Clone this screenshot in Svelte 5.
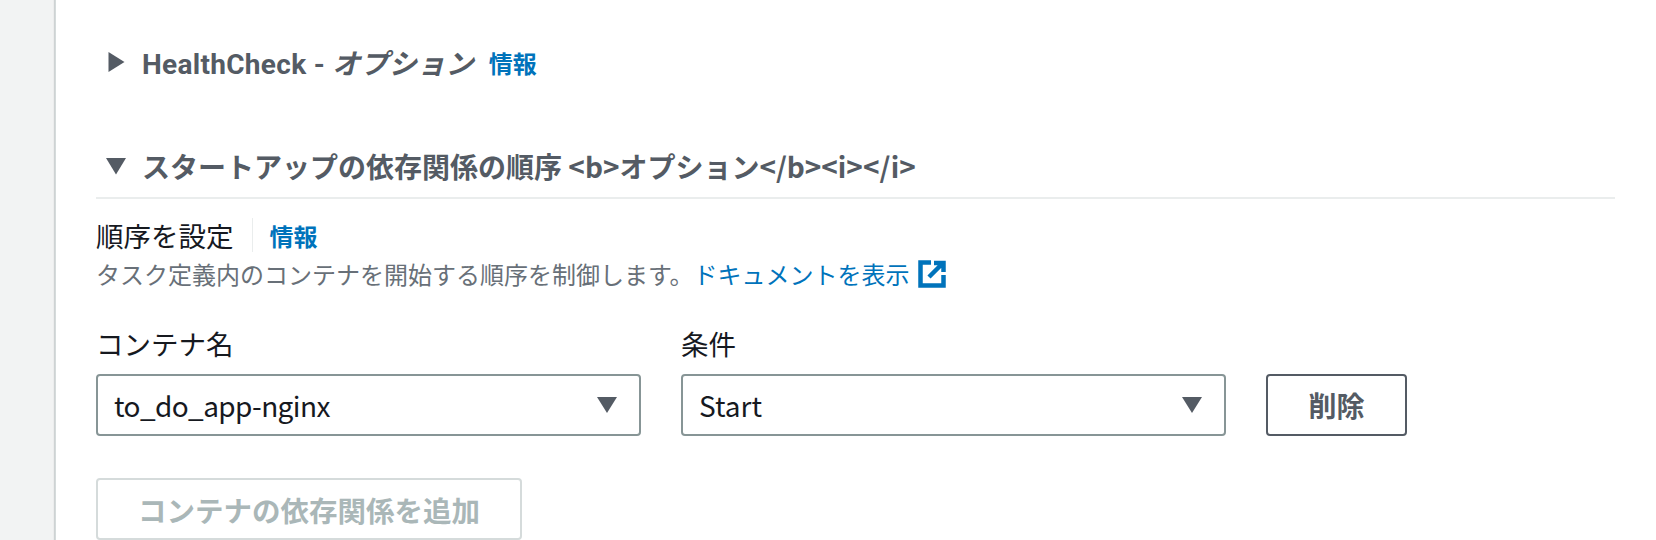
<script>
	let containerName = 'to_do_app-nginx';
	let condition = 'Start';
</script>

<main class="page">
	<div class="panel">
		<div class="section health">
			<div class="head">
				<svg class="caret" viewBox="0 0 20 20"><path d="M2.5 0 L2.5 20 L18.5 10 Z" stroke-linejoin="round" /></svg>
				<span class="title latin">HealthCheck - <em>オプション</em></span>
				<a class="info first" href="#top">情報</a>
			</div>
		</div>

		<div class="section deps">
			<div class="head rule">
				<svg class="caret" viewBox="0 0 20 20"><path d="M0 2 L20 2 L10 18.5 Z" /></svg>
				<span class="title">スタートアップの依存関係の順序 &lt;b&gt;オプション&lt;/b&gt;&lt;i&gt;&lt;/i&gt;</span>
			</div>

			<div class="label-row">
				<span class="label">順序を設定</span>
				<a class="info split" href="#top">情報</a>
			</div>
			<p class="hint">
				タスク定義内のコンテナを開始する順序を制御します。<a href="#top" class="doc">ドキュメントを表示</a>
				<svg class="ext" viewBox="0 0 28 28">
					<path d="M13 2.5 H2.5 V25.5 H25.5 V15" />
					<path d="M16 3 H25.5 V12 M25 3 L11 17" />
				</svg>
			</p>

			<div class="fields">
				<div class="field">
					<span class="flabel">コンテナ名</span>
					<div class="select">
						<span class="tight">{containerName}</span>
						<svg class="arrow" viewBox="0 0 20 16"><path d="M0 0 H20 L10 16 Z" /></svg>
					</div>
				</div>
				<div class="field">
					<span class="flabel">条件</span>
					<div class="select">
						<span>{condition}</span>
						<svg class="arrow" viewBox="0 0 20 16"><path d="M0 0 H20 L10 16 Z" /></svg>
					</div>
				</div>
				<button class="remove">削除</button>
			</div>

			<button class="add" disabled>コンテナの依存関係を追加</button>
		</div>
	</div>
</main>

<style>
	:global(body) {
		margin: 0;
		background: #f2f3f3;
		overflow: hidden;
	}

	.page {
		height: 540px;
		padding-left: 55px;
		font-family: "Noto Sans CJK JP", "Noto Sans", sans-serif;
		color: #16191f;
		box-sizing: border-box;
	}

	.panel {
		height: 100%;
		background: #fff;
		border-left: 1px solid #d5dbdb;
		box-shadow: -1px 0 1px rgba(0, 28, 36, 0.15);
		padding: 0 41px 0 40px;
		overflow: hidden;
	}

	.section.health {
		padding-top: 44px;
	}

	.section.deps {
		padding-top: 68px;
	}

	.head {
		display: flex;
		align-items: center;
		height: 36px;
		font-size: 28px;
		font-weight: 700;
		color: #545b64;
		padding-left: 10px;
	}

	.head.rule {
		border-bottom: 2px solid #eaeded;
		padding-bottom: 13px;
	}

	.caret {
		width: 20px;
		height: 20px;
		fill: #545b64;
		margin-right: 16px;
		flex: none;
	}

	.title.latin {
		font-family: Roboto, "Noto Sans CJK JP", sans-serif;
		letter-spacing: 0.3px;
	}

	.title em {
		font-style: italic;
		font-weight: 700;
	}

	.info {
		color: #0073bb;
		font-size: 24px;
		font-weight: 700;
		text-decoration: none;
	}

	.info.first {
		margin-left: 15px;
	}

	.label-row {
		display: flex;
		align-items: center;
		margin-top: 19px;
		height: 34px;
	}

	.label {
		font-size: 27.5px;
		color: #16191f;
		padding-right: 18px;
		border-right: 1px solid #eaeded;
		line-height: 34px;
	}

	.info.split {
		margin-left: 17px;
	}

	.hint {
		margin: 5px 0 0;
		font-size: 24px;
		line-height: 34px;
		color: #687078;
		display: flex;
		align-items: center;
	}

	.doc {
		color: #0073bb;
		text-decoration: none;
	}

	.ext {
		width: 28px;
		height: 28px;
		margin-left: 8px;
		fill: none;
		stroke: #0073bb;
		stroke-width: 4.5;
	}

	.fields {
		display: flex;
		align-items: flex-end;
		gap: 40px;
		margin-top: 35px;
	}

	.field {
		display: flex;
		flex-direction: column;
		width: 545px;
	}

	.flabel {
		font-size: 27.5px;
		line-height: 34px;
		margin-bottom: 14px;
	}

	.select {
		display: flex;
		align-items: center;
		justify-content: space-between;
		height: 62px;
		box-sizing: border-box;
		border: 2px solid #879596;
		border-radius: 4px;
		padding: 0 22px 0 16px;
		font-size: 28px;
	}

	.tight {
		letter-spacing: -0.6px;
	}

	.arrow {
		width: 20px;
		height: 16px;
		fill: #545b64;
	}

	.remove {
		width: 141px;
		height: 62px;
		background: #fff;
		border: 2px solid #545b64;
		border-radius: 4px;
		font: inherit;
		font-size: 28px;
		font-weight: 700;
		color: #545b64;
	}

	.add {
		display: block;
		margin-top: 42px;
		width: 426px;
		height: 62px;
		background: #fff;
		border: 2px solid #d5dbdb;
		border-radius: 4px;
		font: inherit;
		font-size: 28.5px;
		font-weight: 700;
		color: #aab7b8;
	}
</style>
